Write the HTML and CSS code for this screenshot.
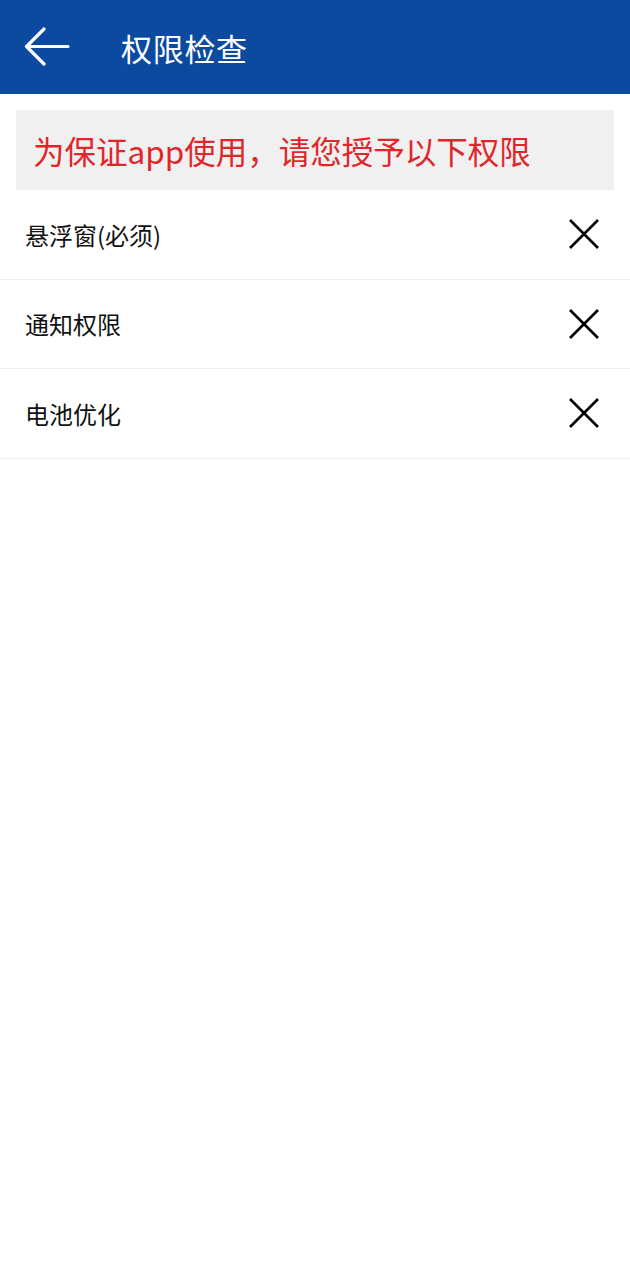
FILE: index.html
```html
<!DOCTYPE html>
<html lang="zh-CN">
<head>
    <meta charset="UTF-8">
    <meta name="viewport" content="width=device-width, initial-scale=1.0">
    <title>权限检查</title>
    <link rel="stylesheet" href="styles.css">
</head>
<body>

    <header class="top-bar">
        <a href="#" class="back-btn">
            <svg width="46" height="40" viewBox="0 0 46 40">
                <path d="M44 19.5 H3 M20 2 L2.5 19.5 L20 37" fill="none" stroke="#fff" stroke-width="3.2" stroke-linecap="round" stroke-linejoin="round"/>
            </svg>
        </a>
        <h1>权限检查</h1>
    </header>

    <div class="notice">
        <p>为保证app使用，请您授予以下权限</p>
    </div>

    <ul class="perm-list">
        <li class="perm-item">
            <span>悬浮窗(必须)</span>
            <svg class="state-icon" width="32" height="30" viewBox="0 0 32 30">
                <path d="M2 1 L30 29 M30 1 L2 29" fill="none" stroke="#000" stroke-width="2.6"/>
            </svg>
        </li>
        <li class="perm-item">
            <span>通知权限</span>
            <svg class="state-icon" width="32" height="30" viewBox="0 0 32 30">
                <path d="M2 1 L30 29 M30 1 L2 29" fill="none" stroke="#000" stroke-width="2.6"/>
            </svg>
        </li>
        <li class="perm-item">
            <span>电池优化</span>
            <svg class="state-icon" width="32" height="30" viewBox="0 0 32 30">
                <path d="M2 1 L30 29 M30 1 L2 29" fill="none" stroke="#000" stroke-width="2.6"/>
            </svg>
        </li>
    </ul>

</body>
</html>
```

FILE: styles.css
```css
/* Reset some default styles */
body, h1, p, ul, li {
    margin: 0;
    padding: 0;
}

body {
    font-family: "Noto Sans CJK SC", "Noto Sans", sans-serif;
    background-color: #fff;
    color: #111;
}

.top-bar {
    display: flex;
    align-items: center;
    height: 94px;
    background-color: #0b4a9f;
    color: #fff;
}

.back-btn {
    display: flex;
    margin-left: 24px;
}

.top-bar h1 {
    margin-left: 51px;
    font-size: 31px;
    font-weight: normal;
    letter-spacing: 0.7px;
}

.notice {
    display: flex;
    align-items: center;
    height: 80px;
    margin: 16px 16px 0;
    padding-left: 17px;
    background-color: #f0f0f0;
}

.notice p {
    color: #e0262a;
    font-size: 31.5px;
}

.perm-list {
    list-style: none;
}

.perm-item {
    display: flex;
    align-items: center;
    justify-content: space-between;
    height: 88.5px;
    padding: 0 30px 0 25px;
    border-bottom: 1px solid #f0f0f0;
    font-size: 24px;
}
```
